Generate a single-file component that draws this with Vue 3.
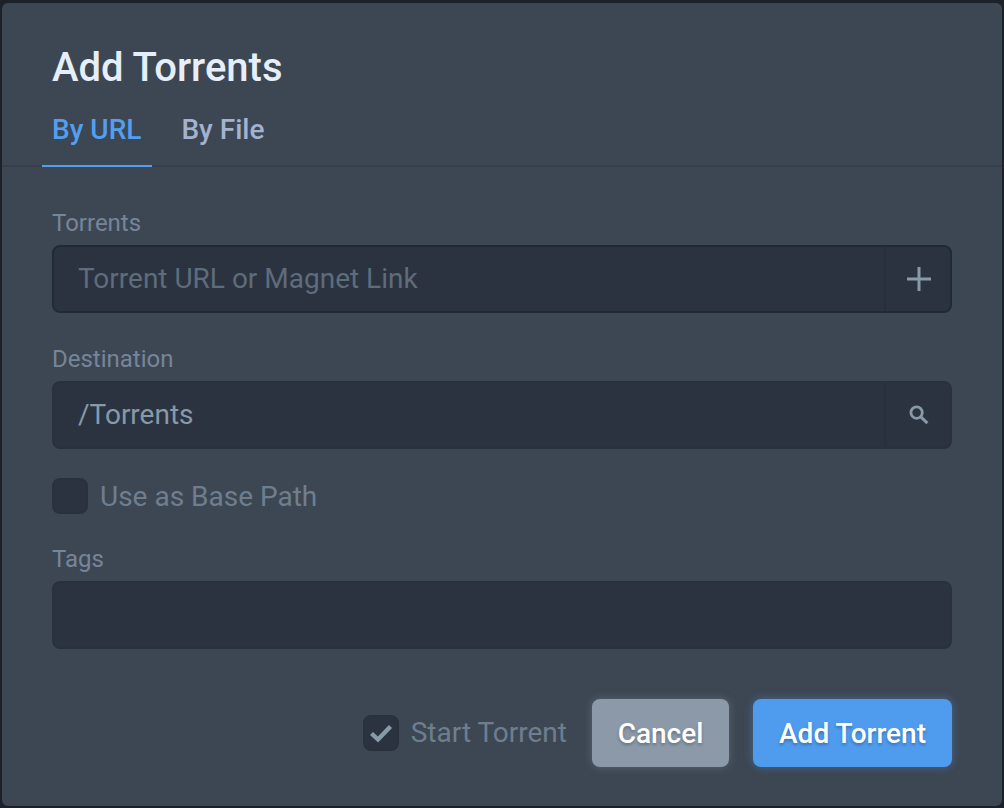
<template>
  <div class="backdrop">
    <div class="modal">
      <header class="modal__header">
        <h1 class="modal__title">Add Torrents</h1>
        <nav class="tabs">
          <button
            v-for="tab in tabs"
            :key="tab"
            class="tabs__item"
            :class="{ 'is-active': tab === activeTab }"
            @click="activeTab = tab"
          >
            {{ tab }}
          </button>
        </nav>
      </header>

      <form class="modal__body" @submit.prevent>
        <div class="field">
          <label class="field__label">Torrents</label>
          <div class="textbox textbox--focus">
            <input class="textbox__input" type="text" placeholder="Torrent URL or Magnet Link" />
            <button type="button" class="textbox__addon">
              <svg width="26" height="26" viewBox="0 0 26 26">
                <path d="M13 1v24M1 13h24" stroke="#8899a8" stroke-width="3" fill="none" />
              </svg>
            </button>
          </div>
        </div>

        <div class="field">
          <label class="field__label">Destination</label>
          <div class="textbox">
            <input class="textbox__input" type="text" value="/Torrents" />
            <button type="button" class="textbox__addon">
              <svg width="20" height="20" viewBox="0 0 20 20">
                <circle cx="7.6" cy="7.6" r="5.7" stroke="#8899a8" stroke-width="2.8" fill="none" />
                <path d="M11.8 11.8l6.6 6.4" stroke="#8899a8" stroke-width="3" fill="none" />
              </svg>
            </button>
          </div>
        </div>

        <label class="check check--path">
          <span class="check__box"></span>
          <span class="check__label">Use as Base Path</span>
        </label>

        <div class="field">
          <label class="field__label">Tags</label>
          <div class="textbox">
            <input class="textbox__input" type="text" />
          </div>
        </div>

        <footer class="actions">
          <label class="check">
            <span class="check__box">
              <svg width="24" height="20" viewBox="0 0 24 20">
                <path d="M2.5 10.5l6.5 6L21.5 3.5" stroke="#8899a8" stroke-width="4.4" fill="none" />
              </svg>
            </span>
            <span class="check__label">Start Torrent</span>
          </label>
          <button type="button" class="btn btn--cancel">Cancel</button>
          <button type="button" class="btn btn--primary">Add Torrent</button>
        </footer>
      </form>
    </div>
  </div>
</template>

<script setup>
import { ref } from 'vue';

const tabs = ['By URL', 'By File'];
const activeTab = ref('By URL');
</script>

<style>
html,
body {
  margin: 0;
  background: #1d2129;
}
</style>

<style scoped>
.backdrop {
  box-sizing: border-box;
  width: 1004px;
  height: 808px;
  padding: 3px 2px 2px;
  font-family: Roboto, sans-serif;
}

.modal {
  height: 803px;
  box-sizing: border-box;
  background: #3d4753;
  border-radius: 6px;
  overflow: hidden;
}

.modal__header {
  padding: 0 50px;
  border-bottom: 2px solid #363f4a;
  height: 164px;
  box-sizing: border-box;
}

.modal__title {
  margin: 0;
  padding-top: 43px;
  font-size: 40px;
  font-weight: 500;
  line-height: 44px;
  color: #e6eefa;
}

.tabs {
  display: flex;
  margin: 8px 0 0 -10px;
}

.tabs__item {
  height: 69px;
  padding: 0 10px 3px;
  margin-right: 20px;
  border: 0;
  border-bottom: 2px solid transparent;
  background: none;
  font: 500 28px/32px Roboto, sans-serif;
  color: #a3b2d0;
  box-sizing: border-box;
}

.tabs__item.is-active {
  padding-right: 11px;
  margin-right: 19px;
  color: #529ff0;
  border-bottom-color: #529ff0;
}

.modal__body {
  padding: 41px 50px 0;
}

.field {
  margin-bottom: 31px;
}

.field__label {
  display: block;
  margin-bottom: 7px;
  font-size: 24px;
  line-height: 30px;
  color: #76859a;
}

.textbox {
  display: flex;
  height: 68px;
  background: #2b3340;
  border: 2px solid #29313d;
  border-radius: 8px;
  box-sizing: border-box;
}

.textbox--focus {
  border-color: #202a36;
}

.textbox__input {
  flex: 1;
  min-width: 0;
  padding: 0 24px 1px;
  border: 0;
  outline: 0;
  background: none;
  font: 28px Roboto, sans-serif;
  color: #8899a8;
}

.textbox__input::placeholder {
  color: #5e6c7c;
  opacity: 1;
}

.textbox__addon {
  display: flex;
  align-items: center;
  justify-content: center;
  width: 66px;
  padding: 0 0 0 1px;
  border: 0;
  border-left: 2px solid #262f3b;
  background: none;
}

.check {
  display: flex;
  align-items: center;
  gap: 12px;
}

.check--path {
  margin: -2px 0 30px;
}

.check__box {
  display: flex;
  align-items: center;
  justify-content: center;
  width: 36px;
  height: 36px;
  background: #2b3340;
  border: 2px solid #29313d;
  border-radius: 8px;
  box-sizing: border-box;
}

.check__label {
  font-size: 28px;
  line-height: 32px;
  color: #6f7e8f;
}

.check--path .check__label {
  padding-top: 2px;
}

.actions {
  display: flex;
  align-items: center;
  justify-content: flex-end;
  margin-top: 50px;
}

.btn {
  height: 68px;
  border: 0;
  border-radius: 8px;
  font: 500 28px Roboto, sans-serif;
  color: #fff;
  text-shadow: 0 2px 3px rgba(0, 0, 0, 0.25);
}

.btn--cancel {
  width: 137px;
  margin: 0 24px 0 25px;
  background: #8b99a8;
  box-shadow: 0 0 8px rgba(139, 153, 168, 0.4);
}

.btn--primary {
  width: 199px;
  background: #4f9bed;
  box-shadow: 0 0 8px rgba(79, 155, 237, 0.4);
}
</style>
